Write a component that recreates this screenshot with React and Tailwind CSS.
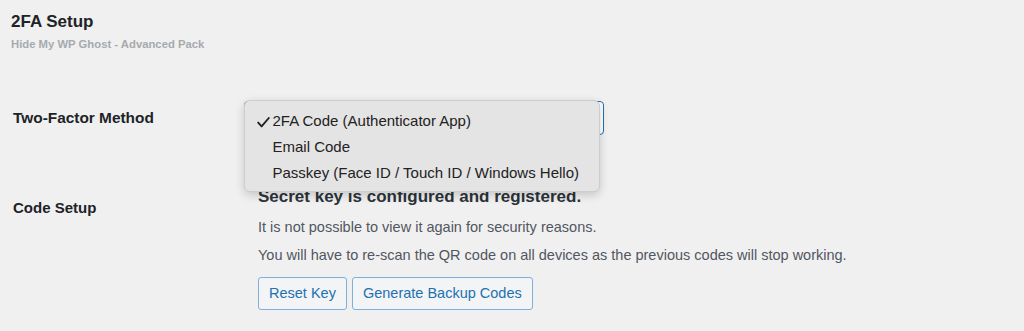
import React from "react";

function Check() {
  return (
    <svg width="13" height="11" viewBox="0 0 13 11" className="absolute left-[12px] top-[16px]">
      <path d="M1.2 5.6 L4.6 9.4 L11.8 1" fill="none" stroke="#222" strokeWidth="1.9" strokeLinecap="round" strokeLinejoin="round" />
    </svg>
  );
}

export default function App() {
  return (
    <div
      className="w-full h-[331px] overflow-hidden bg-[#f0f0f1] text-[#1d2327]"
      style={{ fontFamily: '"Liberation Sans", Arial, Helvetica, sans-serif' }}
    >
      <div className="pt-[12px] pl-[11px]">
        <h2 className="text-[17px] leading-[20px] font-bold text-[#1d2327]">2FA Setup</h2>
        <div className="mt-[5px] text-[11.3px] leading-[14px] font-bold text-[#a7aaad]">
          Hide My WP Ghost - Advanced Pack
        </div>
      </div>

      <div className="mt-[50px]">
        <div className="flex items-center">
          <div className="w-[244px] pl-[13px] text-[15.4px] leading-[20px] font-bold text-[#1d2327]">
            Two-Factor Method
          </div>
          <div className="relative w-[360px] h-[34px] rounded-[4px] border-[1.5px] border-[#2271b1] bg-white">
            <div className="absolute left-[-1.5px] top-[-2.5px] w-[356px] h-[92px] rounded-[6px] border border-[#cdcdcd] bg-[#e4e4e4] shadow-[0_3px_10px_rgba(0,0,0,0.18)] pt-[7px] z-10">
              <Check />
              <div className="pl-[28px] text-[15px] leading-[26px] text-[#222]">2FA Code (Authenticator App)</div>
              <div className="pl-[28px] text-[15px] leading-[26px] text-[#222]">Email Code</div>
              <div className="pl-[28px] text-[15px] leading-[26px] text-[#222]">Passkey (Face ID / Touch ID / Windows Hello)</div>
            </div>
          </div>
        </div>

        <div className="flex items-start mt-[51px]">
          <div className="w-[244px] pl-[13px] mt-[12px] text-[15px] leading-[20px] font-bold text-[#1d2327]">
            Code Setup
          </div>
          <div className="pl-[14px]">
            <div className="text-[17px] leading-[22px] font-bold text-[#2c3338]">
              Secret key is configured and registered.
            </div>
            <p className="mt-[9px] text-[14.5px] leading-[20px] text-[#50575e]">
              It is not possible to view it again for security reasons.
            </p>
            <p className="mt-[8px] text-[14.5px] leading-[20px] text-[#50575e]">
              You will have to re-scan the QR code on all devices as the previous codes will stop working.
            </p>
            <div className="mt-[12px] flex gap-[5px]">
              <button className="h-[33px] px-[10px] rounded-[3px] border border-[#7fb0dc] bg-[#f3f4f5] text-[14.5px] text-[#2271b1]">
                Reset Key
              </button>
              <button className="h-[33px] px-[10px] rounded-[3px] border border-[#7fb0dc] bg-[#f3f4f5] text-[14.5px] text-[#2271b1]">
                Generate Backup Codes
              </button>
            </div>
          </div>
        </div>
      </div>
    </div>
  );
}
